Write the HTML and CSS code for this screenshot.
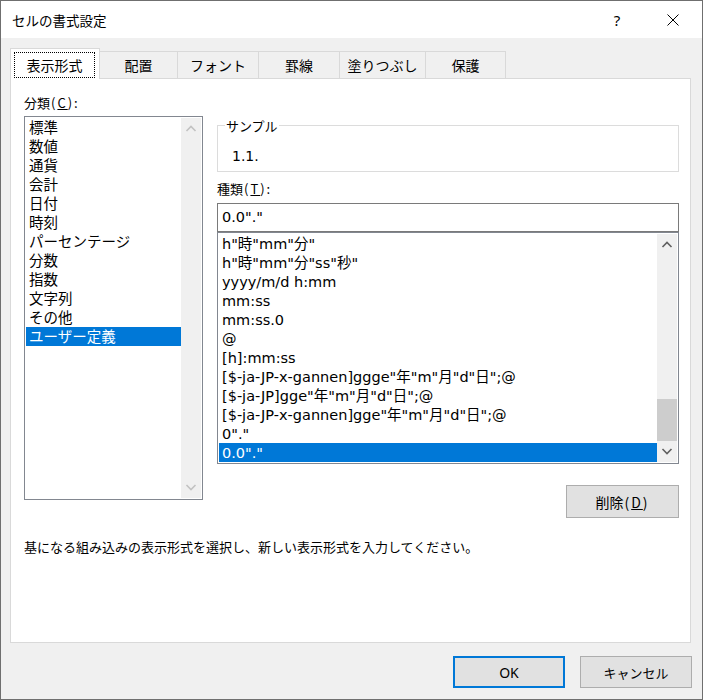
FILE: index.html
```html
<!DOCTYPE html>
<html lang="ja">
<head>
<meta charset="utf-8">
<title>セルの書式設定</title>
<link rel="stylesheet" href="styles.css">
</head>
<body>
<div class="window">
  <div class="titlebar">
    <span class="title">セルの書式設定</span>
    <span class="help">?</span>
    <span class="close"><svg width="12" height="12" viewBox="0 0 12 12"><path d="M0.5 0.5 L11.5 11.5 M11.5 0.5 L0.5 11.5" stroke="#000" stroke-width="1" fill="none"/></svg></span>
  </div>
  <div class="main">
    <div class="tabs">
      <div class="tab active"><span class="focus">表示形式</span></div>
      <div class="tab t1">配置</div>
      <div class="tab t2">フォント</div>
      <div class="tab t3">罫線</div>
      <div class="tab t4">塗りつぶし</div>
      <div class="tab t5">保護</div>
    </div>
    <div class="panel">
      <div class="cols">
        <div class="left">
          <div class="label">分類<span class="acc">(<u>C</u>):</span></div>
          <div class="listbox cat">
            <ul class="items">
              <li>標準</li>
              <li>数値</li>
              <li>通貨</li>
              <li>会計</li>
              <li>日付</li>
              <li>時刻</li>
              <li>パーセンテージ</li>
              <li>分数</li>
              <li>指数</li>
              <li>文字列</li>
              <li>その他</li>
              <li class="sel">ユーザー定義</li>
            </ul>
            <div class="scrollbar disabled">
              <div class="sbtn"><svg width="20" height="21" viewBox="0 0 20 21"><polyline points="5.5,13 10,8.5 14.5,13" fill="none" stroke="#c2c2c2" stroke-width="1.6"/></svg></div>
              <div class="track"></div>
              <div class="sbtn"><svg width="20" height="21" viewBox="0 0 20 21"><polyline points="5.5,8 10,12.5 14.5,8" fill="none" stroke="#c2c2c2" stroke-width="1.6"/></svg></div>
            </div>
          </div>
        </div>
        <div class="right">
          <div class="sample">
            <span class="legend">サンプル</span>
            <div class="sample-value">1.1.</div>
          </div>
          <div class="label kind">種類<span class="acc">(<u>T</u>):</span></div>
          <div class="input">0.0"."</div>
          <div class="listbox types">
            <ul class="items fmt">
              <li>h"時"mm"分"</li>
              <li>h"時"mm"分"ss"秒"</li>
              <li>yyyy/m/d h:mm</li>
              <li>mm:ss</li>
              <li>mm:ss.0</li>
              <li>@</li>
              <li>[h]:mm:ss</li>
              <li>[$-ja-JP-x-gannen]ggge"年"m"月"d"日";@</li>
              <li>[$-ja-JP]gge"年"m"月"d"日";@</li>
              <li>[$-ja-JP-x-gannen]gge"年"m"月"d"日";@</li>
              <li>0"."</li>
              <li class="sel">0.0"."</li>
            </ul>
            <div class="scrollbar">
              <div class="sbtn"><svg width="20" height="21" viewBox="0 0 20 21"><polyline points="5.5,13 10,8.5 14.5,13" fill="none" stroke="#606060" stroke-width="1.6"/></svg></div>
              <div class="track tall"></div>
              <div class="thumb"></div>
              <div class="sbtn"><svg width="20" height="21" viewBox="0 0 20 21"><polyline points="5.5,8 10,12.5 14.5,8" fill="none" stroke="#606060" stroke-width="1.6"/></svg></div>
            </div>
          </div>
          <button class="btn del">削除<span class="acc">(<u>D</u>)</span></button>
        </div>
      </div>
      <div class="desc">基になる組み込みの表示形式を選択し、新しい表示形式を入力してください。</div>
    </div>
    <div class="footer">
      <button class="btn ok">OK</button>
      <button class="btn cancel">キャンセル</button>
    </div>
  </div>
</div>
</body>
</html>
```

FILE: styles.css
```css
html, body {
  margin: 0;
  padding: 0;
}
body {
  width: 703px;
  height: 700px;
  font-family: "Noto Sans CJK JP", "Noto Sans", sans-serif;
  color: #000;
  overflow: hidden;
}
.window {
  box-sizing: border-box;
  width: 703px;
  height: 700px;
  border: 1px solid #6f6f6f;
  background: #f0f0f0;
  display: flex;
  flex-direction: column;
}
.titlebar {
  flex: none;
  height: 37px;
  background: #fff;
  display: flex;
  align-items: center;
}
.title {
  flex: 1;
  margin-left: 11px;
  font-size: 13.5px;
  line-height: 18px;
}
.help {
  width: 12px;
  text-align: center;
  font-family: "Noto Sans", sans-serif;
  font-size: 15px;
  line-height: 18px;
}
.close {
  display: flex;
  width: 12px;
  margin-left: 44px;
  margin-right: 23px;
}
.main {
  flex: 1;
  padding: 10px 10px 0 9px;
  display: flex;
  flex-direction: column;
}
.tabs {
  display: flex;
  align-items: flex-end;
  height: 30px;
}
.tab {
  box-sizing: border-box;
  height: 27px;
  border-top: 1px solid #d9d9d9;
  border-right: 1px solid #d9d9d9;
  background: #f0f0f0;
  display: flex;
  align-items: center;
  justify-content: center;
  font-size: 14px;
  line-height: 18px;
}
.tab.active {
  width: 90px;
  height: 31px;
  margin-bottom: -1px;
  border-left: 1px solid #d9d9d9;
  background: #fff;
  position: relative;
  z-index: 1;
  padding: 3px 4px 1px 3px;
  align-items: stretch;
}
.focus {
  flex: 1;
  border: 1px dotted #000;
  display: flex;
  align-items: center;
  justify-content: center;
}
.t1 { width: 78px; }
.t2 { width: 81px; }
.t3 { width: 81px; }
.t4 { width: 86px; }
.t5 { width: 80px; }
.panel {
  box-sizing: border-box;
  width: 681px;
  height: 565px;
  background: #fff;
  border: 1px solid #d9d9d9;
  padding: 16px 11px 0 13px;
}
.cols {
  display: flex;
  align-items: flex-start;
}
.left {
  width: 179px;
}
.label {
  font-size: 13px;
  line-height: 16px;
  height: 16px;
  white-space: nowrap;
}
.acc {
  letter-spacing: 2px;
  margin-left: 1px;
}
.listbox {
  box-sizing: border-box;
  border: 1px solid #828790;
  padding: 1px;
  display: flex;
  background: #fff;
}
.cat {
  margin-top: 5px;
  height: 384px;
}
.items {
  list-style: none;
  margin: 0;
  padding: 0;
  flex: 1;
  overflow: hidden;
}
.items li {
  box-sizing: border-box;
  height: 19px;
  line-height: 19px;
  padding-left: 3px;
  font-family: "DejaVu Sans", "Noto Sans CJK JP", sans-serif;
  font-size: 14.5px;
  white-space: nowrap;
}
.cat .items li {
  padding-top: 2px;
  line-height: 17px;
  overflow: hidden;
}
.items li.sel {
  background: #0078d7;
  color: #fff;
}
.fmt li {
  padding-top: 1px;
  line-height: 18px;
  overflow: hidden;
}
.scrollbar {
  width: 20px;
  background: #f0f0f0;
  display: flex;
  flex-direction: column;
}
.sbtn {
  height: 21px;
  display: flex;
}
.track {
  flex: 1;
}
.track.tall {
  flex: none;
  height: 144px;
}
.thumb {
  height: 42px;
  background: #cdcdcd;
}
.right {
  margin-left: 14px;
  width: 462px;
  display: flex;
  flex-direction: column;
}
.sample {
  box-sizing: border-box;
  position: relative;
  margin-top: 30px;
  height: 47px;
  border: 1px solid #dcdcdc;
}
.legend {
  position: absolute;
  left: 7px;
  top: -8px;
  padding: 0 1px;
  background: #fff;
  font-size: 13px;
  line-height: 16px;
}
.sample-value {
  padding: 22px 0 0 14px;
  font-family: "DejaVu Sans", sans-serif;
  font-size: 14px;
  line-height: 16px;
}
.kind {
  margin-top: 9px;
}
.input {
  box-sizing: border-box;
  margin-top: 6px;
  height: 29px;
  border: 1px solid #7a7a7a;
  padding-left: 4px;
  font-family: "DejaVu Sans", sans-serif;
  font-size: 14.5px;
  line-height: 27px;
}
.types {
  height: 232px;
}
.btn {
  box-sizing: border-box;
  background: #e1e1e1;
  border: 1px solid #adadad;
  padding: 0;
  margin: 0;
  font-family: "Noto Sans CJK JP", "Noto Sans", sans-serif;
  color: #000;
}
.del {
  margin-top: 21px;
  align-self: flex-end;
  width: 113px;
  height: 33px;
  font-size: 14px;
}
.desc {
  margin-top: 21px;
  font-size: 13px;
  line-height: 16px;
  white-space: nowrap;
}
.footer {
  margin-top: 13px;
  display: flex;
  justify-content: flex-end;
  gap: 15px;
}
.footer .btn {
  width: 112px;
  height: 32px;
  font-size: 13px;
}
.footer .ok {
  border: 2px solid #0078d7;
  font-family: "Noto Sans", sans-serif;
  font-size: 14px;
}
```
